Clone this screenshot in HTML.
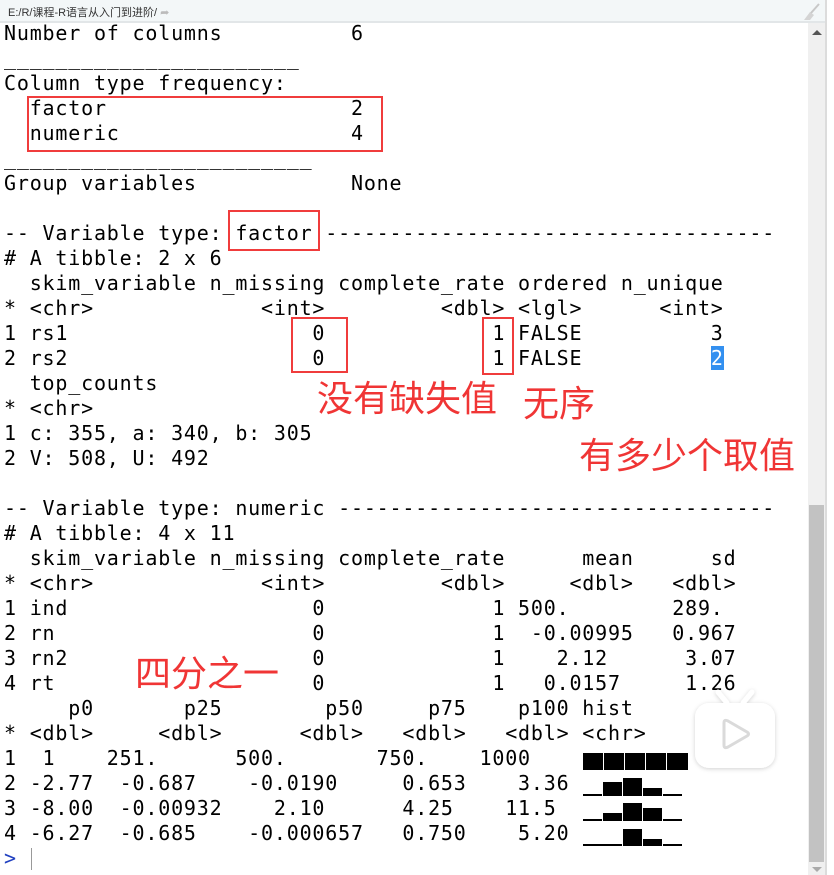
<!DOCTYPE html>
<html><head><meta charset="utf-8"><style>
html,body{margin:0;padding:0;}
body{width:834px;height:875px;position:relative;overflow:hidden;background:#fff;}
.top{position:absolute;left:0;top:0;width:826px;height:21px;background:#f3f7f8;border-bottom:2px solid #e2e6e8;}
.path{position:absolute;left:8px;top:4px;font:11px "Liberation Sans","Noto Sans CJK SC",sans-serif;color:#333;}
pre{position:absolute;left:4px;top:21px;margin:0;font-family:"DejaVu Sans Mono",monospace;font-size:20px;letter-spacing:0.81px;line-height:25px;color:#000;}
.box{position:absolute;border:2px solid #f03c3c;box-sizing:border-box;}
.red{position:absolute;color:#f03535;font-family:"Noto Sans CJK SC",sans-serif;font-size:36px;line-height:38px;white-space:nowrap;}
.hl{background:#3390f0;color:#fff;}
.sb{position:absolute;left:808px;top:23px;width:17px;height:852px;background:#f0f0f0;}
.thumb{position:absolute;left:809px;top:505px;width:15px;height:357px;background:#c2c2c2;}
.rb{position:absolute;left:825px;top:0;width:2px;height:875px;background:#dcdcdc;}
.blk{position:absolute;background:#000;}
</style></head><body>
<div class="top"><span class="path">E:/R/课程-R语言从入门到进阶/ <span style="color:#bbb">➦</span></span>
<svg style="position:absolute;left:800px;top:3px" width="22" height="18"><path d="M19 1 L11 10" stroke="#c8c8c8" stroke-width="2"/><path d="M4 17 L10 9 L14 12 L10 17 Z" fill="#d4d4d4"/></svg></div>
<pre>Number of columns          6
_______________________
Column type frequency:
  factor                   2
  numeric                  4
________________________
Group variables            None

-- Variable type: factor -----------------------------------
# A tibble: 2 x 6
  skim_variable n_missing complete_rate ordered n_unique
* &lt;chr&gt;             &lt;int&gt;         &lt;dbl&gt; &lt;lgl&gt;      &lt;int&gt;
1 rs1                   0             1 FALSE          3
2 rs2                   0             1 FALSE          <span class="hl">2</span>
  top_counts
* &lt;chr&gt;
1 c: 355, a: 340, b: 305
2 V: 508, U: 492

-- Variable type: numeric ----------------------------------
# A tibble: 4 x 11
  skim_variable n_missing complete_rate      mean      sd
* &lt;chr&gt;             &lt;int&gt;         &lt;dbl&gt;     &lt;dbl&gt;   &lt;dbl&gt;
1 ind                   0             1 500.        289.
2 rn                    0             1  -0.00995   0.967
3 rn2                   0             1    2.12      3.07
4 rt                    0             1   0.0157     1.26
     p0       p25        p50     p75    p100 hist
* &lt;dbl&gt;     &lt;dbl&gt;      &lt;dbl&gt;   &lt;dbl&gt;   &lt;dbl&gt; &lt;chr&gt;
1  1    251.      500.       750.    1000
2 -2.77  -0.687    -0.0190     0.653    3.36
3 -8.00  -0.00932    2.10      4.25    11.5
4 -6.27  -0.685    -0.000657   0.750    5.20
<span style="color:#2040c0">&gt;</span></pre>
<div style="position:absolute;left:31px;top:848px;width:1px;height:22px;background:#999"></div>

<div class="box" style="left:27px;top:96px;width:356px;height:56px"></div>
<div class="box" style="left:228px;top:210px;width:92px;height:41px"></div>
<div class="box" style="left:291px;top:317px;width:57px;height:56px"></div>
<div class="box" style="left:482px;top:317px;width:32px;height:58px"></div>
<div class="red" style="left:317px;top:377px">没有缺失值</div>
<div class="red" style="left:523px;top:382px">无序</div>
<div class="red" style="left:579px;top:434px">有多少个取值</div>
<div class="red" style="left:135px;top:652px">四分之一</div>

<!-- histograms -->
<div class="blk" style="left:583px;top:753px;width:20px;height:17px"></div>
<div class="blk" style="left:604px;top:753px;width:20px;height:17px"></div>
<div class="blk" style="left:625px;top:753px;width:20px;height:17px"></div>
<div class="blk" style="left:646px;top:753px;width:20px;height:17px"></div>
<div class="blk" style="left:667px;top:753px;width:21px;height:17px"></div>

<div class="blk" style="left:583px;top:794px;width:19px;height:2px"></div>
<div class="blk" style="left:603px;top:782px;width:19px;height:14px"></div>
<div class="blk" style="left:623px;top:778px;width:19px;height:18px"></div>
<div class="blk" style="left:643px;top:788px;width:19px;height:8px"></div>
<div class="blk" style="left:663px;top:794px;width:19px;height:2px"></div>

<div class="blk" style="left:583px;top:819px;width:19px;height:2px"></div>
<div class="blk" style="left:603px;top:813px;width:19px;height:8px"></div>
<div class="blk" style="left:623px;top:803px;width:19px;height:18px"></div>
<div class="blk" style="left:643px;top:808px;width:19px;height:13px"></div>
<div class="blk" style="left:663px;top:819px;width:19px;height:2px"></div>

<div class="blk" style="left:583px;top:844px;width:39px;height:2px"></div>
<div class="blk" style="left:623px;top:829px;width:19px;height:17px"></div>
<div class="blk" style="left:643px;top:839px;width:19px;height:7px"></div>
<div class="blk" style="left:663px;top:844px;width:19px;height:2px"></div>

<!-- tv icon -->
<svg style="position:absolute;left:688px;top:686px" width="96" height="92">
<defs><filter id="s" x="-20%" y="-20%" width="140%" height="140%"><feDropShadow dx="0" dy="1" stdDeviation="2" flood-color="#000" flood-opacity="0.18"/></filter></defs>
<g filter="url(#s)">
<path d="M30 6 L39 17 M64 6 L55 17" stroke="#fff" stroke-width="5" stroke-linecap="round"/>
<rect x="7" y="17" width="80" height="65" rx="14" fill="#fff"/>
</g>
<path d="M36 37 Q36 33 40 35 L59 46 Q62 48 59 50 L40 61 Q36 63 36 59 Z" fill="none" stroke="#dadada" stroke-width="3" stroke-linejoin="round"/>
</svg>

<div class="sb"></div>
<div class="thumb"></div>
<div class="rb"></div>
<svg style="position:absolute;left:810px;top:28px" width="14" height="10"><path d="M2 7 L7 2 L12 7 Z" fill="#555"/></svg>
<svg style="position:absolute;left:810px;top:864px" width="14" height="10"><path d="M2 3 L7 8 L12 3 Z" fill="#aaa"/></svg>
</body></html>
